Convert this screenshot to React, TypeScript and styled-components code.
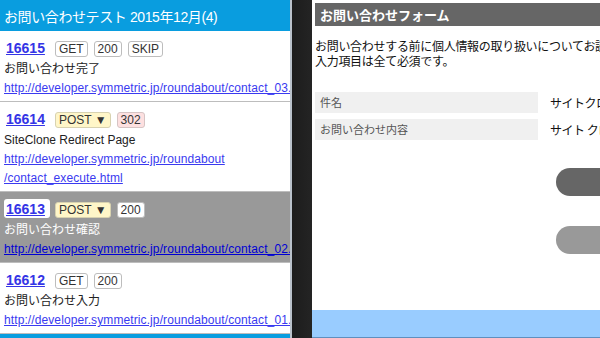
import React from "react";
import styled, { createGlobalStyle } from "styled-components";

type Badge = { label: string; kind?: "plain" | "post" | "redirect" };

type Entry = {
  id: string;
  badges: Badge[];
  title: string;
  url: string[];
  selected?: boolean;
};

const entries: Entry[] = [
  {
    id: "16615",
    badges: [{ label: "GET" }, { label: "200" }, { label: "SKIP" }],
    title: "お問い合わせ完了",
    url: ["http://developer.symmetric.jp/roundabout/contact_03.html"],
  },
  {
    id: "16614",
    badges: [
      { label: "POST ▼", kind: "post" },
      { label: "302", kind: "redirect" },
    ],
    title: "SiteClone Redirect Page",
    url: ["http://developer.symmetric.jp/roundabout", "/contact_execute.html"],
  },
  {
    id: "16613",
    badges: [{ label: "POST ▼", kind: "post" }, { label: "200" }],
    title: "お問い合わせ確認",
    url: ["http://developer.symmetric.jp/roundabout/contact_02.html"],
    selected: true,
  },
  {
    id: "16612",
    badges: [{ label: "GET" }, { label: "200" }],
    title: "お問い合わせ入力",
    url: ["http://developer.symmetric.jp/roundabout/contact_01.html"],
  },
];

const formRows = [
  { label: "件名", value: "サイトクローンテスト" },
  { label: "お問い合わせ内容", value: "サイト クローンのテストです" },
];

const App: React.FC = () => {
  return (
    <>
      <GlobalStyle />
      <Layout>
        <HistoryPanel>
          <HistoryHeader>お問い合わせテスト 2015年12月(4)</HistoryHeader>
          <EntryList>
            {entries.map((entry) => (
              <EntryItem key={entry.id} selected={!!entry.selected}>
                <EntryHead>
                  <EntryNumber selected={!!entry.selected}>{entry.id}</EntryNumber>
                  {entry.badges.map((badge) => (
                    <StatusBadge key={badge.label} kind={badge.kind || "plain"}>
                      {badge.label}
                    </StatusBadge>
                  ))}
                </EntryHead>
                <EntryTitle>{entry.title}</EntryTitle>
                <EntryLink selected={!!entry.selected} wrap={entry.url.length > 1}>
                  {entry.url.map((part, i) => (
                    <React.Fragment key={i}>
                      {i > 0 && <wbr />}
                      {part}
                    </React.Fragment>
                  ))}
                </EntryLink>
              </EntryItem>
            ))}
          </EntryList>
          <HistoryFooter />
        </HistoryPanel>

        <Divider />

        <PreviewPanel>
          <PreviewContent>
            <FormTitle>お問い合わせフォーム</FormTitle>
            <FormLead>
              お問い合わせする前に個人情報の取り扱いについてお読みください。
              <br />
              入力項目は全て必須です。
            </FormLead>
            <FormTable>
              {formRows.map((row) => (
                <FormRow key={row.label}>
                  <FormLabel>{row.label}</FormLabel>
                  <FormValue>{row.value}</FormValue>
                </FormRow>
              ))}
            </FormTable>
            <ActionList>
              <ActionButton variant="primary">送信する</ActionButton>
              <ActionButton variant="secondary">戻る</ActionButton>
            </ActionList>
          </PreviewContent>
          <PreviewFooter />
        </PreviewPanel>
      </Layout>
    </>
  );
};

export default App;

const GlobalStyle = createGlobalStyle`
  html, body {
    margin: 0;
    padding: 0;
    background: #ffffff;
  }
  body {
    font-family: "Liberation Sans", "Noto Sans CJK JP", sans-serif;
    color: #222222;
  }
`;

const Layout = styled.div`
  display: flex;
  width: 600px;
  height: 338px;
  overflow: hidden;
`;

// 左側：履歴リスト
const HistoryPanel = styled.div`
  display: flex;
  flex-direction: column;
  width: 290px;
  flex: none;
  overflow: hidden;
  border-right: 2px solid #b9c1ca;
  background: #ffffff;
`;

const HistoryHeader = styled.div`
  display: flex;
  align-items: center;
  height: 31px;
  padding: 1px 0 0 4px;
  box-sizing: border-box;
  background: #099ddf;
  color: #ffffff;
  font-size: 14px;
  letter-spacing: -0.4px;
  white-space: nowrap;
`;

const EntryList = styled.div`
  display: flex;
  flex-direction: column;
  flex: 1;
`;

const EntryItem = styled.div<{ selected: boolean }>`
  padding: 7px 0 3px 4px;
  border-bottom: 1px solid #bdbdbd;
  background: ${(p) => (p.selected ? "#999999" : "#ffffff")};
  color: ${(p) => (p.selected ? "#ffffff" : "#222222")};
`;

const EntryHead = styled.div`
  display: flex;
  align-items: flex-end;
  gap: 6px;
  height: 19px;
`;

const EntryNumber = styled.span<{ selected: boolean }>`
  display: inline-flex;
  align-items: center;
  height: 19px;
  padding: 0 5px 0 2px;
  margin-right: -1px;
  box-sizing: border-box;
  border-radius: 3px;
  background: ${(p) => (p.selected ? "#ffffff" : "transparent")};
  color: #3434e6;
  font-size: 14px;
  font-weight: bold;
  text-decoration: underline;
`;

const badgeColors = {
  plain: { bg: "#ffffff", border: "#bdbdbd" },
  post: { bg: "#fff6c8", border: "#d8d2b0" },
  redirect: { bg: "#fde0e0", border: "#d6c4c4" },
};

const StatusBadge = styled.span<{ kind: "plain" | "post" | "redirect" }>`
  display: inline-flex;
  align-items: center;
  height: 16px;
  padding: 0 3px;
  box-sizing: border-box;
  border: 1px solid ${(p) => badgeColors[p.kind].border};
  border-radius: 3px;
  background: ${(p) => badgeColors[p.kind].bg};
  color: #333333;
  font-size: 12px;
  line-height: 14px;
  white-space: nowrap;
`;

const EntryTitle = styled.div`
  margin-top: 3px;
  font-size: 12px;
  line-height: 19px;
  white-space: nowrap;
`;

const EntryLink = styled.a<{ selected: boolean; wrap: boolean }>`
  display: block;
  font-size: 12px;
  line-height: 19px;
  letter-spacing: 0.1px;
  color: ${(p) => (p.selected ? "#0000d4" : "#3a3af0")};
  text-decoration: underline;
  white-space: ${(p) => (p.wrap ? "normal" : "nowrap")};
  cursor: pointer;
`;

const HistoryFooter = styled.div`
  height: 4px;
  flex: none;
  background: #099ddf;
`;

const Divider = styled.div`
  width: 20px;
  flex: none;
  background: linear-gradient(to right, #1c1c1c, #242424);
`;

// 右側：プレビュー
const PreviewPanel = styled.div`
  display: flex;
  flex-direction: column;
  flex: 1;
  min-width: 0;
  overflow: hidden;
  background: #ffffff;
`;

const PreviewContent = styled.div`
  width: 560px;
  padding: 3px 0 0 3px;
  flex: 1;
`;

const FormTitle = styled.div`
  height: 23px;
  padding-left: 5px;
  background: #666666;
  color: #ffffff;
  font-family: "Noto Sans CJK JP", sans-serif;
  font-size: 13px;
  font-weight: bold;
  line-height: 23px;
`;

const FormLead = styled.p`
  margin: 12px 0 0;
  font-family: "Noto Sans CJK JP", sans-serif;
  font-size: 12px;
  line-height: 15px;
  letter-spacing: -0.3px;
  color: #111111;
  white-space: nowrap;
`;

const FormTable = styled.div`
  display: flex;
  flex-direction: column;
  gap: 6px;
  margin-top: 24px;
`;

const FormRow = styled.div`
  display: flex;
  height: 21px;
`;

const FormLabel = styled.div`
  width: 223px;
  padding-left: 5px;
  box-sizing: border-box;
  background: #f0f0f0;
  color: #555555;
  font-family: "Noto Sans CJK JP", sans-serif;
  font-size: 11px;
  line-height: 21px;
`;

const FormValue = styled.div`
  padding-left: 12px;
  font-family: "Noto Sans CJK JP", sans-serif;
  font-size: 12px;
  line-height: 21px;
  letter-spacing: -0.5px;
  color: #111111;
  white-space: nowrap;
`;

const ActionList = styled.div`
  display: flex;
  flex-direction: column;
  gap: 30px;
  margin: 28px 0 0 241px;
`;

const ActionButton = styled.button<{ variant: "primary" | "secondary" }>`
  width: 200px;
  height: 28px;
  border: none;
  border-radius: 14px;
  background: ${(p) => (p.variant === "primary" ? "#666666" : "#999999")};
  color: #ffffff;
  font-family: "Noto Sans CJK JP", sans-serif;
  font-size: 12px;
  cursor: pointer;
`;

const PreviewFooter = styled.div`
  height: 28px;
  flex: none;
  background: #99ccff;
  border-bottom: 1px solid #5f8fbf;
  box-sizing: border-box;
`;
